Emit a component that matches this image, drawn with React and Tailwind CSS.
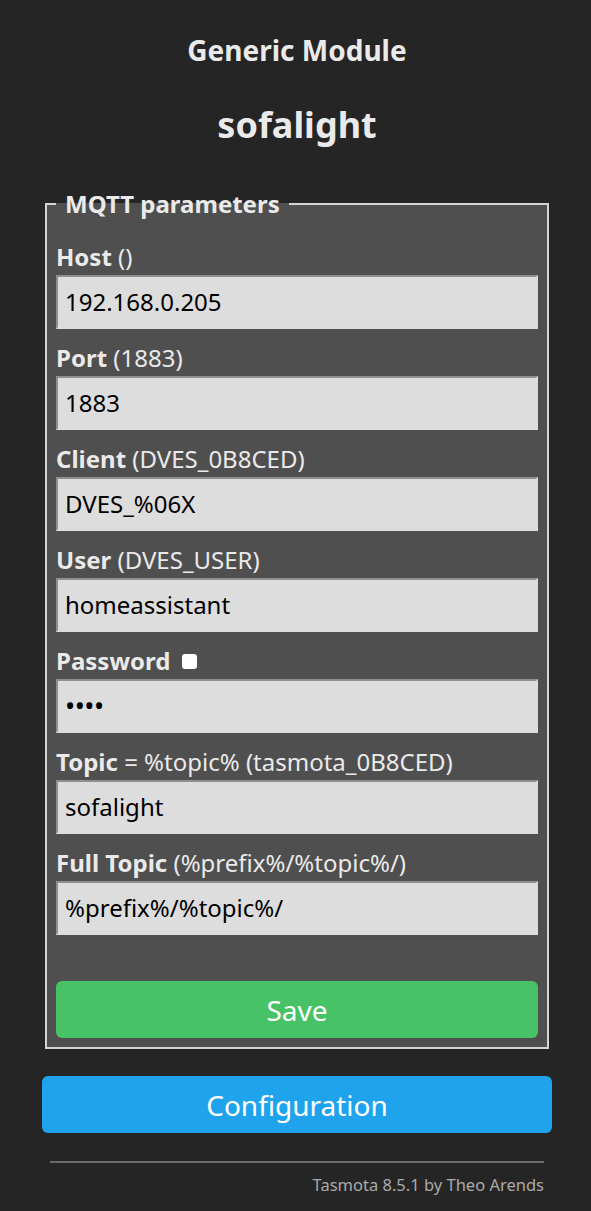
import React from 'react';

const fields = [
  { label: 'Host', hint: ' ()', value: '192.168.0.205' },
  { label: 'Port', hint: ' (1883)', value: '1883' },
  { label: 'Client', hint: ' (DVES_0B8CED)', value: 'DVES_%06X' },
  { label: 'User', hint: ' (DVES_USER)', value: 'homeassistant' },
  { label: 'Password', checkbox: true, value: '••••', password: true },
  { label: 'Topic', hint: ' = %topic% (tasmota_0B8CED)', value: 'sofalight' },
  { label: 'Full Topic', hint: ' (%prefix%/%topic%/)', value: '%prefix%/%topic%/' },
];

const Field = ({ label, hint, value, checkbox, password }) => (
  <div className="flex flex-col">
    <div className="flex items-center h-[30px] text-[24px] leading-[30px]">
      <b>{label}</b>
      {hint && <span className="whitespace-pre">{hint}</span>}
      {checkbox && (
        <span className="ml-[12px] w-[15px] h-[15px] bg-white rounded-[3px] inline-block" />
      )}
    </div>
    <div
      className={`mt-[3px] h-[54px] flex items-center px-[7px] bg-[#dddddd] text-black border-2 border-t-[#8f8f8f] border-l-[#8f8f8f] border-r-[#dddddd] border-b-[#dddddd] ${
        password ? 'text-[27px] tracking-[-0.5px]' : 'text-[24px]'
      }`}
    >
      {value}
    </div>
  </div>
);

export default function App() {
  return (
    <div
      className="min-h-[1211px] bg-[#252525] text-[#eaeaea]"
      style={{ fontFamily: '"Noto Sans", "Open Sans", sans-serif' }}
    >
      <div className="ml-[42px] w-[510px] flex flex-col">
        {/* Header */}
        <h3 className="mt-[31px] text-center text-[28px] leading-[38px] font-bold">Generic Module</h3>
        <h2 className="mt-[33px] text-center text-[36px] leading-[46px] font-bold">sofalight</h2>

        {/* MQTT fieldset */}
        <fieldset className="mt-[43px] mx-[3px] border-2 border-[#d4d4d4] bg-[#4f4f4f] px-[9px] pb-[9px]">
          <legend className="px-[9px] text-[24px] leading-[26px] font-bold">MQTT parameters</legend>
          <div className="mt-[25px] flex flex-col gap-[14px]">
            {fields.map((f) => (
              <Field key={f.label} {...f} />
            ))}
          </div>
          <button className="mt-[46px] w-full h-[57px] rounded-[6px] bg-[#47c266] text-white text-[28px]">
            Save
          </button>
        </fieldset>

        <button className="mt-[27px] w-full h-[57px] rounded-[6px] bg-[#1fa3ec] text-white text-[28px]">
          Configuration
        </button>

        <div className="mt-[28px] mx-[8px] h-[2px] bg-[#6a6a6a]" />
        <div className="mt-[10px] mr-[8px] text-right text-[16.5px] text-[#aaaaaa]">
          Tasmota 8.5.1 by Theo Arends
        </div>
      </div>
    </div>
  );
}
